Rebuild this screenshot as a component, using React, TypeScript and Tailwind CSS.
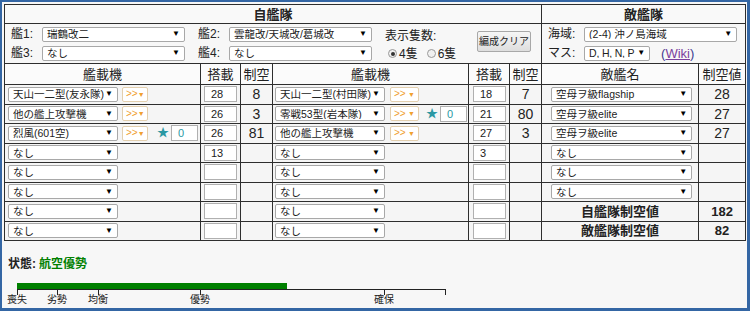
import clsx from 'clsx';

type Plane = {
    name: string;
    prof?: boolean;
    star?: boolean;
    slot?: string;
    air?: string;
};

const leftPlanes: Plane[] = [
    { name: "天山一二型(友永隊)", prof: true, slot: "28", air: "8" },
    { name: "他の艦上攻撃機", prof: true, slot: "26", air: "3" },
    { name: "烈風(601空)", prof: true, star: true, slot: "26", air: "81" },
    { name: "なし", slot: "13" },
    { name: "なし" },
    { name: "なし" },
    { name: "なし" },
    { name: "なし" },
];

const rightPlanes: Plane[] = [
    { name: "天山一二型(村田隊)", prof: true, slot: "18", air: "7" },
    { name: "零戦53型(岩本隊)", prof: true, star: true, slot: "21", air: "80" },
    { name: "他の艦上攻撃機", prof: true, slot: "27", air: "3" },
    { name: "なし", slot: "3" },
    { name: "なし" },
    { name: "なし" },
    { name: "なし" },
    { name: "なし" },
];

const enemies = [
    { name: "空母ヲ級flagship", air: "28" },
    { name: "空母ヲ級elite", air: "27" },
    { name: "空母ヲ級elite", air: "27" },
    { name: "なし", air: "" },
    { name: "なし", air: "" },
    { name: "なし", air: "" },
];

const totals = [
    { label: "自艦隊制空値", value: "182" },
    { label: "敵艦隊制空値", value: "82" },
];

const ticks = [
    { x: 0, label: "喪失" },
    { x: 40, label: "劣勢" },
    { x: 81, label: "均衡" },
    { x: 183, label: "優勢" },
    { x: 367, label: "確保" },
    { x: 428, label: "" },
];

const cell = "border border-[#2e2e2e] p-0";

interface SelProps {
    text: string;
    className?: string;
}

function Sel({ text, className }: SelProps) {
    return (
        <div
            className={clsx(
                "flex items-center h-[15px] bg-white border border-[#a8a8a8] rounded-[2px] pl-[4px] pr-[4px] text-[10.5px] leading-none text-[#222]",
                className
            )}
        >
            <span className="flex-1 whitespace-nowrap overflow-hidden">{text}</span>
            <span className="text-[8px] text-black">▼</span>
        </div>
    );
}

function ProfSel({ className }: { className?: string }) {
    return (
        <div
            className={clsx(
                "flex items-center h-[15px] bg-white border border-[#e3cfae] rounded-[2px] pl-[3px] pr-[3px] text-[10px] leading-none text-[#f0a030]",
                className
            )}
        >
            <span className="flex-1">&gt;&gt;</span>
            <span className="text-[7px]">▼</span>
        </div>
    );
}

function Box({ value, className }: { value?: string; className?: string }) {
    return (
        <div
            className={clsx(
                "h-[16px] bg-white border border-[#b0b0b0] pl-[6px] text-[11px] leading-[14px]",
                className
            )}
        >
            {value}
        </div>
    );
}

function PlaneCell({ plane, side }: { plane: Plane; side: 'left' | 'right' }) {
    const left = side === 'left';
    return (
        <div className={clsx("flex items-center", left ? "pl-[3px]" : "pl-[2px]")}>
            <Sel text={plane.name} className="w-[110px]" />
            {plane.prof && (
                <ProfSel className={left ? "ml-[4px] w-[26px]" : "ml-[5px] w-[29px]"} />
            )}
            {plane.star && (
                <>
                    <span className={clsx("text-[12px] leading-none text-[#2b98a3]", left ? "ml-[9px]" : "ml-[7px]")}>★</span>
                    <Box value="0" className="ml-[2px] w-[27px] text-[#2b98a3]" />
                </>
            )}
        </div>
    );
}

function Radio({ checked, label }: { checked?: boolean; label: string }) {
    return (
        <span className="flex items-center gap-[2px]">
            <span className="flex items-center justify-center w-[9px] h-[9px] rounded-full border border-[#999] bg-[#f0f0f0]">
                {checked && <span className="w-[4px] h-[4px] rounded-full bg-[#333]" />}
            </span>
            <span className="text-[12px] leading-none">{label}</span>
        </span>
    );
}

export default function App() {
    return (
        <div
            className="w-[750px] h-[311px] overflow-hidden border-l-2 border-t-2 border-r-[3px] border-b-[3px] border-[#3466a4] bg-[#f7f7f7] text-[#222]"
            style={{ fontFamily: '"Liberation Sans", "Noto Sans CJK JP", sans-serif' }}
        >
            <div className="w-[741px] ml-[2px] mt-[2px]">
                <table className="table-fixed border-collapse w-[741px]">
                    <colgroup>
                        <col className="w-[196px]" />
                        <col className="w-[40px]" />
                        <col className="w-[32px]" />
                        <col className="w-[196px]" />
                        <col className="w-[41px]" />
                        <col className="w-[32px]" />
                        <col className="w-[157px]" />
                        <col className="w-[47px]" />
                    </colgroup>
                    <tbody>
                        <tr className="h-[19px]">
                            <td colSpan={6} className={clsx(cell, "bg-[#f9f9f9] text-center text-[13px] font-bold leading-none")}>自艦隊</td>
                            <td colSpan={2} className={clsx(cell, "bg-[#f9f9f9] text-center text-[13px] font-bold leading-none")}>敵艦隊</td>
                        </tr>
                        <tr className="h-[40px]">
                            <td colSpan={6} className={clsx(cell, "bg-[#f7f7f7]")}>
                                <div className="flex items-center pl-[6px]">
                                    <div className="flex flex-col gap-[4px]">
                                        <div className="flex items-center">
                                            <span className="w-[31px] text-[12px] leading-none">艦1:</span>
                                            <Sel text="瑞鶴改二" className="w-[143px]" />
                                            <span className="ml-[13px] w-[31px] text-[12px] leading-none">艦2:</span>
                                            <Sel text="雲龍改/天城改/葛城改" className="w-[143px]" />
                                        </div>
                                        <div className="flex items-center">
                                            <span className="w-[31px] text-[12px] leading-none">艦3:</span>
                                            <Sel text="なし" className="w-[143px]" />
                                            <span className="ml-[13px] w-[31px] text-[12px] leading-none">艦4:</span>
                                            <Sel text="なし" className="w-[143px]" />
                                        </div>
                                    </div>
                                    <div className="ml-[13px] w-[80px] flex flex-col gap-[6px] pt-[2px]">
                                        <span className="text-[12px] leading-none">表示隻数:</span>
                                        <div className="flex items-center gap-[9px] pl-[3px]">
                                            <Radio checked label="4隻" />
                                            <Radio label="6隻" />
                                        </div>
                                    </div>
                                    <button className="ml-[12px] w-[54px] h-[21px] mt-[-4px] px-0 border border-[#a8a8a8] rounded-[2px] bg-gradient-to-b from-[#f6f6f6] to-[#dedede] text-[10px] leading-none whitespace-nowrap text-[#222]">
                                        編成クリア
                                    </button>
                                </div>
                            </td>
                            <td colSpan={2} className={clsx(cell, "bg-[#f7f7f7]")}>
                                <div className="flex flex-col gap-[4px] pl-[6px]">
                                    <div className="flex items-center">
                                        <span className="w-[36px] text-[12px] leading-none">海域:</span>
                                        <Sel text="(2-4) 沖ノ島海域" className="w-[153px]" />
                                    </div>
                                    <div className="flex items-center">
                                        <span className="w-[36px] text-[12px] leading-none">マス:</span>
                                        <Sel text="D, H, N, P" className="w-[66px] pl-[3px] pr-[3px] tracking-[-0.2px]" />
                                        <span className="ml-[11px] text-[13px] leading-none text-[#3b3b8f]">
                                            (<span className="underline text-[#7b3f9e]">Wiki</span>)
                                        </span>
                                    </div>
                                </div>
                            </td>
                        </tr>
                        <tr className="h-[21px] bg-[#fbfbfb] text-[13px] leading-none">
                            <td className={clsx(cell, "text-center")}>艦載機</td>
                            <td className={clsx(cell, "text-center")}>搭載</td>
                            <td className={clsx(cell, "text-center")}>制空</td>
                            <td className={clsx(cell, "text-center")}>艦載機</td>
                            <td className={clsx(cell, "text-center")}>搭載</td>
                            <td className={clsx(cell, "text-center")}>制空</td>
                            <td className={clsx(cell, "text-center")}>敵艦名</td>
                            <td className={clsx(cell, "text-center")}>制空値</td>
                        </tr>
                        {leftPlanes.map((lp, i) => {
                            const rp = rightPlanes[i];
                            const en = enemies[i];
                            const total = i >= 6 ? totals[i - 6] : null;
                            return (
                                <tr key={`row-${i}`} className="h-[19.5px] bg-[#f5f5f5]">
                                    <td className={cell}>
                                        <PlaneCell plane={lp} side="left" />
                                    </td>
                                    <td className={cell}>
                                        <div className="pl-[3px]">
                                            <Box value={lp.slot} className="w-[33px]" />
                                        </div>
                                    </td>
                                    <td className={clsx(cell, "text-center text-[14px] leading-none")}>{lp.air}</td>
                                    <td className={cell}>
                                        <PlaneCell plane={rp} side="right" />
                                    </td>
                                    <td className={cell}>
                                        <div className="pl-[4px]">
                                            <Box value={rp.slot} className="w-[33px]" />
                                        </div>
                                    </td>
                                    <td className={clsx(cell, "text-center text-[14px] leading-none")}>{rp.air}</td>
                                    {total ? (
                                        <>
                                            <td className={clsx(cell, "text-center text-[13px] font-bold leading-none")}>{total.label}</td>
                                            <td className={clsx(cell, "text-center text-[13px] font-bold leading-none")}>{total.value}</td>
                                        </>
                                    ) : (
                                        <>
                                            <td className={cell}>
                                                <div className="pl-[9px]">
                                                    <Sel text={en.name} className="w-[141px]" />
                                                </div>
                                            </td>
                                            <td className={clsx(cell, "text-center text-[14px] leading-none")}>{en.air}</td>
                                        </>
                                    )}
                                </tr>
                            );
                        })}
                    </tbody>
                </table>

                {/* status */}
                <div className="mt-[15px] ml-[4px] h-[16px] flex items-center text-[12px] font-bold leading-none">
                    <span>状態:</span>
                    <span className="ml-[3px] text-[#008000]">航空優勢</span>
                </div>

                {/* air superiority gauge */}
                <div className="relative mt-[11px] ml-[13px] w-[430px] h-[24px]">
                    <svg width="430" height="12" className="block overflow-visible">
                        <rect x="0" y="0" width="270" height="6" fill="#008000" />
                        <line x1="0" y1="6.5" x2="429" y2="6.5" stroke="#222" strokeWidth="1" />
                        {ticks.map((t) => (
                            <line
                                key={`tick-${t.x}`}
                                x1={t.x + 0.5}
                                y1="6"
                                x2={t.x + 0.5}
                                y2="12"
                                stroke="#222"
                                strokeWidth="1"
                            />
                        ))}
                    </svg>
                    {ticks.filter((t) => t.label).map((t) => (
                        <span
                            key={`label-${t.x}`}
                            className="absolute top-[12px] -translate-x-1/2 text-[10px] leading-none whitespace-nowrap"
                            style={{ left: t.x }}
                        >
                            {t.label}
                        </span>
                    ))}
                </div>
            </div>
        </div>
    );
}
